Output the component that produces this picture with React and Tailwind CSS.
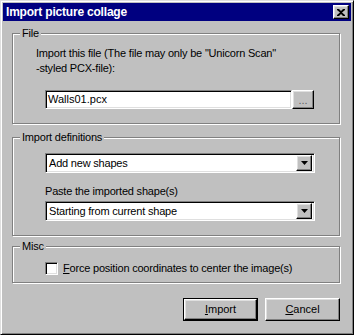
import React from 'react';

const font = { fontFamily: '"Liberation Sans", Arial, sans-serif' };

// classic raised / sunken bevels
const raised = 'border border-t-white border-l-white border-r-black border-b-black shadow-[inset_-1px_-1px_0_#808080,inset_1px_1px_0_#dfdfdf]';
const sunken = 'border border-t-[#808080] border-l-[#808080] border-r-white border-b-white shadow-[inset_1px_1px_0_#000,inset_-1px_-1px_0_#dfdfdf]';
const etched = 'relative border border-[#808080] shadow-[inset_1px_1px_0_#fff,1px_1px_0_#fff]';

const GroupLabel = ({ children }) => (
    <span className="absolute -top-[8px] left-[7px] px-[2px] bg-[#c0c0c0] text-[11px] leading-[14px] tracking-[-0.2px] text-black">
        {children}
    </span>
);

const Combo = ({ value }) => (
    <div className={`flex items-center h-[20px] w-[270px] bg-white ${sunken} p-[2px]`}>
        <span className="flex-1 pl-[1px] text-[11px] leading-[14px] tracking-[-0.2px] text-black">{value}</span>
        <div className={`flex items-center justify-center w-[16px] h-[16px] bg-[#c0c0c0] ${raised}`}>
            <svg width="7" height="4" viewBox="0 0 7 4">
                <path d="M0 0h7L3.5 4z" fill="#000" />
            </svg>
        </div>
    </div>
);

const Button = ({ hot, rest, isDefault }) => (
    <button
        className={`h-[23px] w-[75px] bg-[#c0c0c0] text-[11px] text-black ${isDefault ? 'border border-black' : ''}`}
    >
        <div className={`h-full w-full flex items-center justify-center ${raised}`}>
            <span><span className="underline">{hot}</span>{rest}</span>
        </div>
    </button>
);

export default function App() {
    return (
        <div style={font} className={`w-[354px] h-[335px] bg-[#c0c0c0] p-[2px] border border-t-[#dfdfdf] border-l-[#dfdfdf] border-r-black border-b-black shadow-[inset_1px_1px_0_#fff,inset_-1px_-1px_0_#808080]`}>
            {/* title bar */}
            <div className="h-[18px] bg-[#000080] flex items-center pl-[3px] pr-[2px]">
                <span className="flex-1 text-white font-bold text-[12px] tracking-[-0.2px]">Import picture collage</span>
                <div className={`w-[16px] h-[14px] bg-[#c0c0c0] flex items-center justify-center ${raised}`}>
                    <svg width="8" height="7" viewBox="0 0 8 7">
                        <path d="M0 0h2l2 2 2-2h2v1L5 3.5 8 6v1H6L4 5 2 7H0V6l3-2.5L0 1z" fill="#000" />
                    </svg>
                </div>
            </div>

            <div className="flex flex-col pl-[9px]">
                {/* File */}
                <div className={`mt-[12px] w-[328px] h-[91px] ${etched}`}>
                    <GroupLabel>File</GroupLabel>
                    <div className="flex flex-col pl-[23px] pt-[12px]">
                        <p className="text-[11px] leading-[15px] tracking-[-0.2px] text-black">
                            Import this file (The file may only be "Unicorn Scan"<br />-styled PCX-file):
                        </p>
                        <div className="flex mt-[14px] ml-[9px]">
                            <div className={`flex items-center h-[19px] w-[247px] bg-white ${sunken} px-[2px]`}>
                                <span className="text-[11px] text-black">Walls01.pcx</span>
                            </div>
                            <div className={`flex items-center justify-center h-[19px] w-[22px] bg-[#c0c0c0] ${raised}`}>
                                <span className="text-[11px] leading-[8px] text-[#606060]">...</span>
                            </div>
                        </div>
                    </div>
                </div>

                {/* Import definitions */}
                <div className={`mt-[13px] w-[328px] h-[99px] ${etched}`}>
                    <GroupLabel>Import definitions</GroupLabel>
                    <div className="flex flex-col pl-[32px] pt-[15px]">
                        <Combo value="Add new shapes" />
                        <p className="mt-[11px] text-[11px] leading-[14px] tracking-[-0.2px] text-black">Paste the imported shape(s)</p>
                        <div className="mt-[3px]">
                            <Combo value="Starting from current shape" />
                        </div>
                    </div>
                </div>

                {/* Misc */}
                <div className={`mt-[10px] w-[328px] h-[37px] ${etched}`}>
                    <GroupLabel>Misc</GroupLabel>
                    <div className="flex items-center pl-[32px] pt-[14px]">
                        <div className={`w-[13px] h-[13px] bg-white ${sunken}`} />
                        <span className="ml-[5px] text-[11px] leading-[14px] tracking-[-0.2px] text-black">
                            <span className="underline">F</span>orce position coordinates to center the image(s)
                        </span>
                    </div>
                </div>

                {/* buttons */}
                <div className="mt-[15px] w-[328px] flex justify-end gap-[7px]">
                    <Button hot="I" rest="mport" isDefault />
                    <Button hot="C" rest="ancel" />
                </div>
            </div>
        </div>
    );
}
